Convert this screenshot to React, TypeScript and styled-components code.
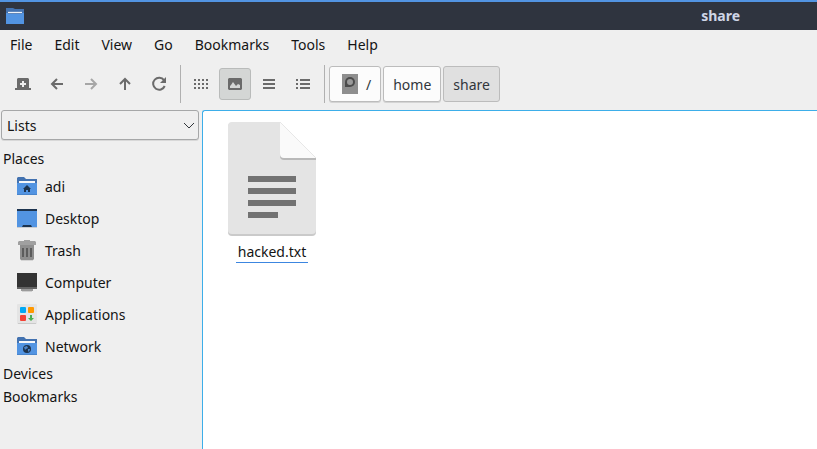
import React from "react";
import styled, { createGlobalStyle } from "styled-components";

const GlobalStyle = createGlobalStyle`
  *, *::before, *::after { box-sizing: border-box; }
  body { margin: 0; background: #efefef; }
  button, select { font: inherit; color: inherit; margin: 0; }
`;

const Window = styled.div`
  display: flex;
  flex-direction: column;
  min-height: 100vh;
  background: #efefef;
  color: #141414;
  font-family: "Noto Sans", "Open Sans", sans-serif;
  font-size: 14px;
  line-height: 20px;
`;

const TitleBar = styled.header`
  display: flex;
  align-items: center;
  justify-content: space-between;
  height: 30px;
  padding: 0 77px 0 6px;
  border-top: 2px solid #5294e2;
  background: #2f343f;
  color: #cfd6e6;
`;

const Title = styled.h1`
  margin: 0;
  font-size: 14px;
  line-height: 20px;
  font-weight: 700;
`;

const MenuBar = styled.nav`
  display: flex;
  gap: 2px;
  height: 30px;
`;

const MenuItem = styled.button`
  padding: 0 10px;
  border: 0;
  background: none;
`;

const ToolBar = styled.div`
  display: flex;
  align-items: center;
  height: 50px;
  padding: 0 0 2px 7px;
`;

const Group = styled.div`
  display: flex;
  gap: 2px;
`;

const ToolButton = styled.button<{ $active?: boolean }>`
  display: flex;
  align-items: center;
  justify-content: center;
  width: 32px;
  height: 32px;
  padding: 0;
  border: 1px solid ${(p) => (p.$active ? "#b9bbba" : "transparent")};
  border-radius: 3px;
  background: ${(p) => (p.$active ? "#d4d6d5" : "transparent")};
  color: #6b6b6b;
  &:disabled { color: #a6a6a6; }
`;

const Separator = styled.div`
  width: 1px;
  height: 38px;
  margin: 0 4px 0 5px;
  background: #b0b0b0;
`;

const Crumb = styled.button<{ $current?: boolean }>`
  display: flex;
  align-items: center;
  gap: 8px;
  height: 36px;
  padding: 0 9px;
  border: 1px solid #bcbcbc;
  border-radius: 3px;
  background: ${(p) => (p.$current ? "#e0e0e0" : "#fcfcfc")};
  box-shadow: 0 1px 0 ${(p) => (p.$current ? "transparent" : "#d4d4d4")};
  color: #31363b;
`;

const Crumbs = styled(Group)`
  ${Crumb}:first-child { padding-left: 12px; }
`;

const Label = styled.span`
  padding-top: 2px;
`;

const Main = styled.div`
  display: grid;
  grid-template-columns: 202px 1fr;
  flex: 1;
`;

const Sidebar = styled.aside`
  padding: 0 3px 0 1px;
`;

const SelectBox = styled.div`
  display: grid;
  align-items: center;
  margin-bottom: 7px;
  > * { grid-area: 1 / 1; }
  svg { justify-self: end; margin-right: 5px; pointer-events: none; }
`;

const Select = styled.select`
  appearance: none;
  width: 100%;
  height: 30px;
  padding: 2px 24px 0 5px;
  border: 1px solid #a6a7a8;
  border-radius: 3px;
  background: #efefef;
  box-shadow: 0 1px 0 #d8d8d8;
`;

const Section = styled.h2`
  margin: 0;
  padding-left: 2px;
  font-size: 14px;
  font-weight: 400;
  line-height: 23px;
`;

const PlaceList = styled.ul`
  margin: 0;
  padding: 0;
  list-style: none;
`;

const Place = styled.button`
  display: flex;
  align-items: center;
  gap: 6px;
  width: 100%;
  height: 32px;
  padding: 0 14px;
  border: 0;
  background: none;
`;

const FileView = styled.main`
  padding: 11px 8px;
  border: 1px solid #3daee9;
  border-right: 0;
  border-bottom: 0;
  border-top-left-radius: 3px;
  background: #fff;
`;

const FileItem = styled.button`
  display: flex;
  flex-direction: column;
  align-items: center;
  gap: 6px;
  width: 122px;
  padding: 0;
  border: 0;
  background: none;
`;

const FileName = styled.span`
  padding: 0 2px;
  border-bottom: 1px solid #3c86e0;
`;

type IconName =
  | "folder" | "newtab" | "back" | "forward" | "up" | "reload"
  | "grid" | "thumbs" | "compact" | "details" | "drive";

const drawings: Record<IconName, React.ReactNode> = {
  folder: (
    <>
      <path d="M0 1h7l2 1h9v6H0z" fill="#4372b0" />
      <path d="M0 6h18v11H0z" fill="#5294e2" />
      <path d="M2 4h14v3H2z" fill="#5e86bb" />
      <path d="M2 5h14v1H2z" fill="#eef2f8" />
    </>
  ),
  newtab: (
    <path fillRule="evenodd" d="M3 4l1-1h10l1 1v9h2v2H1v-2h2zM8 6v2H6v2h2v2h2v-2h2V8h-2V6z" />
  ),
  back: <path d="M9 4 4 9l5 5M4 9h11" fill="none" stroke="currentColor" strokeWidth="2" />,
  forward: <path d="M9 4l5 5-5 5M14 9H3" fill="none" stroke="currentColor" strokeWidth="2" />,
  up: <path d="M4 9l5-5 5 5M9 4v11" fill="none" stroke="currentColor" strokeWidth="2" />,
  reload: (
    <>
      <path d="M14 5.2A6 6 0 1 0 14.7 11" fill="none" stroke="currentColor" strokeWidth="2" />
      <path d="M16 2v6h-6z" />
    </>
  ),
  grid: (
    <>
      {[4, 8, 12].map((y) =>
        [2, 6, 10, 14].map((x) => <rect key={`${x}-${y}`} x={x} y={y} width="2" height="2" />)
      )}
    </>
  ),
  thumbs: (
    <path fillRule="evenodd" d="M3 3h12l1 1v10l-1 1H3l-1-1V4zM4 13h10v-3l-2-1-2 2-3-4-2 3-1 1z" />
  ),
  compact: <path d="M3 4h12v2H3zM3 8h12v2H3zM3 12h12v2H3z" />,
  details: <path d="M2 4h2v2H2zM6 4h10v2H6zM2 8h2v2H2zM6 8h10v2H6zM2 12h2v2H2zM6 12h10v2H6z" />,
  drive: (
    <>
      <path d="M0 0h16v20H0z" fill="#8e8e8e" />
      <path d="M3 13V8a5 5 0 1 1 5 5z" fill="#4b4b4b" />
      <circle cx="8" cy="8" r="3" fill="#9a9a9a" />
    </>
  ),
};

const Icon = ({ name, w = 18, h = 18 }: { name: IconName; w?: number; h?: number }) => (
  <svg width={w} height={h} viewBox={`0 0 ${w} ${h}`} fill="currentColor" aria-hidden="true">
    {drawings[name]}
  </svg>
);

const PlaceFolder = (
  <>
    <path d="M3 3h6l2 2h11v5H2V4z" fill="#4372b0" />
    <path d="M4 7h16v3H4z" fill="#f5f7fa" />
    <path d="M2 9h20v11l-1 1H3l-1-1z" fill="#5294e2" />
    <path d="M2 20h20v1H2z" fill="#4884cb" />
  </>
);

const places: { label: string; icon: React.ReactNode }[] = [
  {
    label: "adi",
    icon: (
      <>
        {PlaceFolder}
        <path d="M12 11l4 4h-1v3h-2v-2h-2v2H9v-3H8z" fill="#1d344f" />
      </>
    ),
  },
  {
    label: "Desktop",
    icon: (
      <>
        <path d="M2 3h20v18H2z" fill="#5294e2" />
        <path d="M2 3h20v2H2zM8 19h8l1 2H7z" fill="#1d344f" />
        <path d="M2 21h20v1H2z" fill="#c9cdd2" />
      </>
    ),
  },
  {
    label: "Trash",
    icon: (
      <>
        <path d="M5 6h14v15l-1 1H6l-1-1z" fill="#8e8e8e" />
        <path d="M9 2h6v1h5l1 1v3H3V4l1-1h5z" fill="#a0a0a0" />
        <path d="M7 10h2v9H7zM11 10h2v9h-2zM15 10h2v9h-2z" fill="#5c5c5c" />
        <path d="M6 22h12v1H6z" fill="#d5d5d5" />
      </>
    ),
  },
  {
    label: "Computer",
    icon: (
      <>
        <path d="M2 3h20v14H2z" fill="#333" />
        <path d="M2 17h20v2H2z" fill="#636363" />
        <path d="M6 19h12v2H6z" fill="#9a9a9a" />
        <path d="M7 21h10v1H7z" fill="#d0d0d0" />
      </>
    ),
  },
  {
    label: "Applications",
    icon: (
      <>
        <rect x="2" y="2" width="20" height="20" rx="1" fill="#e4e4e4" />
        <path d="M3 21h18v1H3z" fill="#cacaca" />
        <rect x="5" y="5" width="6" height="6" rx="1" fill="#03a9f4" />
        <rect x="13" y="5" width="6" height="6" rx="1" fill="#ff9800" />
        <rect x="5" y="13" width="6" height="6" rx="1" fill="#f44336" />
        <path d="M15 13h2v3h2l-3 3-3-3h2z" fill="#4caf50" />
      </>
    ),
  },
  {
    label: "Network",
    icon: (
      <>
        {PlaceFolder}
        <circle cx="12" cy="15" r="4" fill="#1d344f" />
        <path d="M9 13l3-1 1 2-2 1-1 1zM13 15l2 0-1 3-1-1z" fill="#4c86cd" />
      </>
    ),
  },
];

const menus = ["File", "Edit", "View", "Go", "Bookmarks", "Tools", "Help"];

export default function App() {
  return (
    <Window>
      <GlobalStyle />
      <TitleBar>
        <Icon name="folder" />
        <Title>share</Title>
      </TitleBar>
      <MenuBar aria-label="Menu">
        {menus.map((m) => <MenuItem key={m}>{m}</MenuItem>)}
      </MenuBar>
      <ToolBar role="toolbar">
        <Group>
          <ToolButton aria-label="New tab"><Icon name="newtab" /></ToolButton>
          <ToolButton aria-label="Back"><Icon name="back" /></ToolButton>
          <ToolButton aria-label="Forward" disabled><Icon name="forward" /></ToolButton>
          <ToolButton aria-label="Up"><Icon name="up" /></ToolButton>
          <ToolButton aria-label="Reload"><Icon name="reload" /></ToolButton>
        </Group>
        <Separator />
        <Group>
          <ToolButton aria-label="Icon view"><Icon name="grid" /></ToolButton>
          <ToolButton aria-label="Thumbnail view" aria-pressed="true" $active><Icon name="thumbs" /></ToolButton>
          <ToolButton aria-label="Compact view"><Icon name="compact" /></ToolButton>
          <ToolButton aria-label="Detailed list view"><Icon name="details" /></ToolButton>
        </Group>
        <Separator />
        <Crumbs>
          <Crumb><Icon name="drive" w={16} h={20} /><Label>/</Label></Crumb>
          <Crumb><Label>home</Label></Crumb>
          <Crumb $current aria-current="page"><Label>share</Label></Crumb>
        </Crumbs>
      </ToolBar>
      <Main>
        <Sidebar>
          <SelectBox>
            <Select aria-label="Side pane" defaultValue="Lists">
              <option>Lists</option>
              <option>Directory Tree</option>
            </Select>
            <svg width="11" height="7" viewBox="0 0 11 7" fill="none" stroke="#31363b" aria-hidden="true">
              <path d="M1 1l5 5 5-5" />
            </svg>
          </SelectBox>
          <Section>Places</Section>
          <PlaceList>
            {places.map((p) => (
              <li key={p.label}>
                <Place>
                  <svg width="24" height="24" viewBox="0 0 24 24" aria-hidden="true">{p.icon}</svg>
                  <Label>{p.label}</Label>
                </Place>
              </li>
            ))}
          </PlaceList>
          <Section>Devices</Section>
          <Section>Bookmarks</Section>
        </Sidebar>
        <FileView>
          <FileItem>
            <svg width="88" height="114" viewBox="0 0 88 114" aria-hidden="true">
              <path d="M4 1h48l36 36v73a4 4 0 0 1-4 4H4a4 4 0 0 1-4-4V5a4 4 0 0 1 4-4z" fill="#cacaca" />
              <path d="M4 0h48l36 36v72a4 4 0 0 1-4 4H4a4 4 0 0 1-4-4V4a4 4 0 0 1 4-4z" fill="#e4e4e4" />
              <path d="M52 0v34a4 4 0 0 0 4 4h32v-2z" fill="#b9b9b9" />
              <path d="M52 0v32a4 4 0 0 0 4 4h32z" fill="#fafafa" />
              <path d="M20 54h48v6H20zM20 66h48v6H20zM20 78h48v6H20zM20 90h30v6H20z" fill="#727272" />
            </svg>
            <FileName>hacked.txt</FileName>
          </FileItem>
        </FileView>
      </Main>
    </Window>
  );
}
